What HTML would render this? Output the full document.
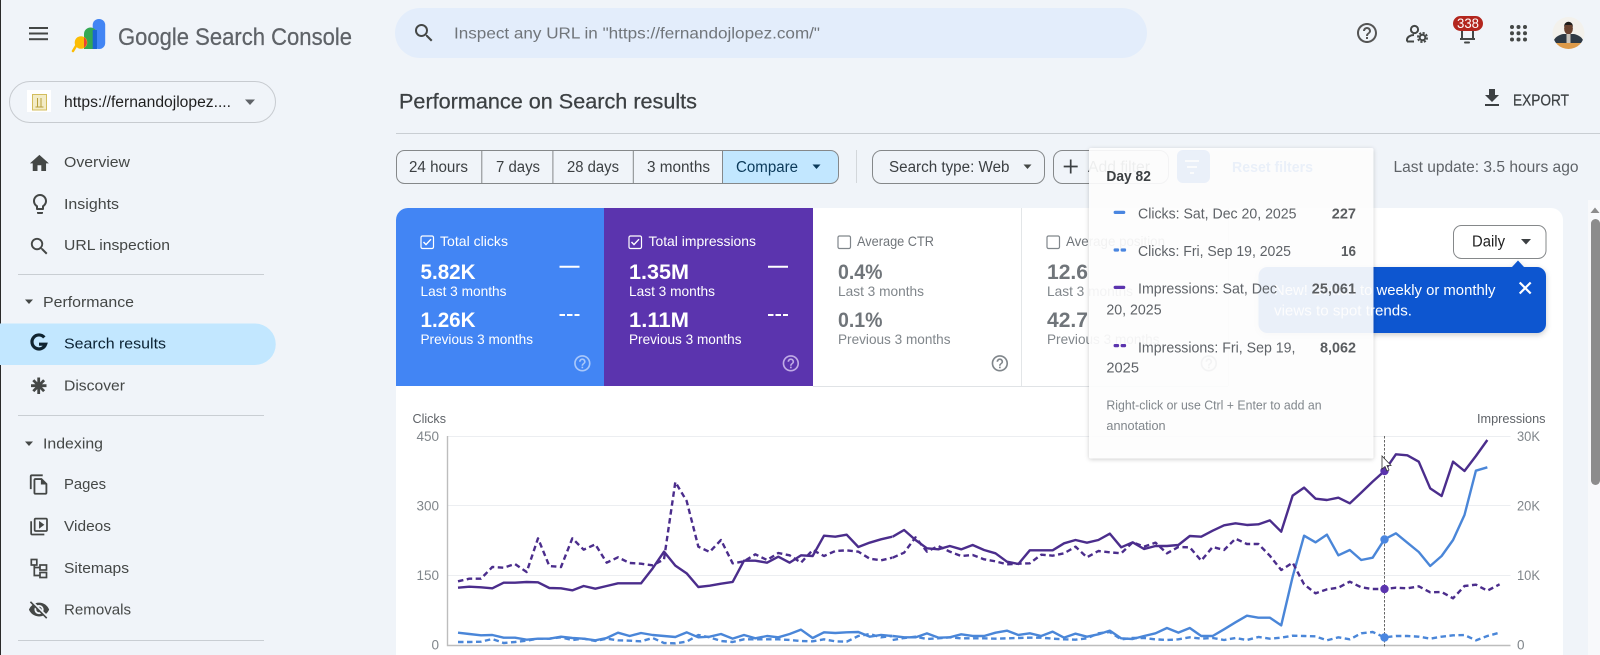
<!DOCTYPE html>
<html lang="en"><head><meta charset="utf-8"><title>Performance on Search results</title>
<style>
html,body{margin:0;padding:0;background:#f0f4f9;width:1600px;height:655px;overflow:hidden}
svg{display:block;filter:blur(.35px)}
text{font-family:"Liberation Sans",Arial,sans-serif}
.s{font-size:15px;fill:#444746;letter-spacing:0}
.t{font-size:15.5px;fill:#3c4043}
.l{font-size:14px}
.v{font-size:21.5px;font-weight:700}
.ax{font-size:13.5px;fill:#80868b}
.tt{font-size:14.5px;fill:#5f6368}
.tv{font-size:14.5px;fill:#5a5d60;font-weight:700}
.ln{fill:none;stroke-width:2.4;stroke-linejoin:round;vector-effect:non-scaling-stroke}
</style></head><body>
<svg width="1600" height="655" viewBox="0 0 1600 655" xmlns="http://www.w3.org/2000/svg">
<defs>
<filter id="sh" x="-10%" y="-10%" width="120%" height="120%"><feDropShadow dx="0" dy="1" stdDeviation="2" flood-color="#000" flood-opacity=".22"/></filter>
<filter id="sh2" x="-10%" y="-10%" width="120%" height="130%"><feDropShadow dx="0" dy="2" stdDeviation="3" flood-color="#000" flood-opacity=".2"/></filter>
<clipPath id="av"><circle cx="1568.5" cy="33" r="16"/></clipPath>
<clipPath id="card"><path d="M408 208H1551a12 12 0 0 1 12 12V655H396V220a12 12 0 0 1 12-12z"/></clipPath>
</defs>
<rect width="1600" height="655" fill="#f0f4f9"/>
<rect x="0" y="0" width="1" height="655" fill="#2a2a2a"/>

<!-- header -->
<g fill="#444746"><rect x="29" y="27" width="19" height="2"/><rect x="29" y="32.5" width="19" height="2"/><rect x="29" y="38.2" width="19" height="2"/></g>
<rect x="92.7" y="19" width="12.5" height="30" rx="6" fill="#4285f4"/>
<path d="M84 49V34a6.5 6.5 0 0 1 13-0v15z" fill="#34a853"/>
<rect x="92.7" y="30" width="4.3" height="19" fill="#1b66d2"/>
<path d="M76 46L73 51" stroke="#fbbc04" stroke-width="2.5" stroke-linecap="round"/>
<circle cx="81" cy="42.5" r="6.3" fill="#fbbc04"/>
<path d="M84 37.2a6.3 6.3 0 0 1 0 10.6z" fill="#ea4335"/>
<text x="118" y="45" font-size="24.5" fill="#5f6368" stroke="#5f6368" stroke-width=".25" textLength="234" lengthAdjust="spacingAndGlyphs">Google Search Console</text>

<rect x="395" y="8" width="752" height="50" rx="25" fill="#e3edfb"/>
<g transform="translate(412,21)" fill="#444746"><path d="M15.5 14h-.79l-.28-.27A6.471 6.471 0 0 0 16 9.5 6.5 6.5 0 1 0 9.5 16c1.61 0 3.09-.59 4.23-1.57l.27.28v.79l5 4.99L20.49 19l-4.99-5zm-6 0C7.01 14 5 11.99 5 9.5S7.01 5 9.5 5 14 7.01 14 9.5 11.99 14 9.5 14z"/></g>
<text x="454" y="38.5" font-size="16" fill="#70757a" textLength="366" lengthAdjust="spacingAndGlyphs">Inspect any URL in "https://fernandojlopez.com/"</text>

<!-- header right -->
<g transform="translate(1355,21)" fill="#555"><path d="M11 18h2v-2h-2v2zm1-16C6.48 2 2 6.48 2 12s4.48 10 10 10 10-4.48 10-10S17.52 2 12 2zm0 18c-4.41 0-8-3.59-8-8s3.59-8 8-8 8 3.59 8 8-3.59 8-8 8zm0-14c-2.21 0-4 1.79-4 4h2c0-1.1.9-2 2-2s2 .9 2 2c0 2-3 1.75-3 5h2c0-2.25 3-2.5 3-5 0-2.21-1.79-4-4-4z"/></g>
<g fill="none" stroke="#444746" stroke-width="2">
<circle cx="1414.5" cy="29.5" r="3.6"/>
<path d="M1407 41.5v-1.7c0-2.8 3.5-4.8 7-4.8"/><path d="M1407 41.5h7"/>
<circle cx="1422.5" cy="37.5" r="2.8"/><circle cx="1422.5" cy="37.5" r="4.6" stroke-dasharray="2.2 1.4" stroke-width="1.8"/>
<path d="M1462 30v9M1473 30v9M1460 39h15" stroke-width="2"/>
</g>
<rect x="1464" y="41.5" width="6" height="2" rx="1" fill="#444746"/>
<rect x="1453" y="16" width="30" height="15" rx="7.5" fill="#b3261e"/>
<text x="1457" y="28" font-size="13.5" fill="#fff" textLength="22" lengthAdjust="spacingAndGlyphs">338</text>
<g fill="#444746"><circle cx="1512" cy="27" r="2"/><circle cx="1518.5" cy="27" r="2"/><circle cx="1525" cy="27" r="2"/><circle cx="1512" cy="33.3" r="2"/><circle cx="1518.5" cy="33.3" r="2"/><circle cx="1525" cy="33.3" r="2"/><circle cx="1512" cy="39.5" r="2"/><circle cx="1518.5" cy="39.5" r="2"/><circle cx="1525" cy="39.5" r="2"/></g>
<g clip-path="url(#av)"><rect x="1552" y="17" width="33" height="33" fill="#f3f1ec"/>
<path d="M1553 43c1-6 6-8 10-9h11c4 1 9 3 10 9z" fill="#2f3a45"/>
<ellipse cx="1568.5" cy="28.5" rx="4.4" ry="6" fill="#6a4330"/><path d="M1564 27c0-7 9-7 9 0l-1-2h-7z" fill="#1e1a18"/>
<rect x="1566.5" y="34" width="4" height="9" fill="#c9c4bc"/>
<rect x="1552" y="43" width="33" height="7" fill="#dd9a4a"/></g>

<!-- sidebar -->
<rect x="9.5" y="81.5" width="266" height="41" rx="20.5" fill="#f0f4f9" stroke="#c7cbd0"/>
<rect x="27" y="90" width="24" height="22" fill="#fff"/>
<rect x="32.5" y="94.5" width="14" height="15.5" fill="#f3ecc6" stroke="#d3bd5c"/>
<path d="M37.5 98v9M41 98v9M35.5 107h8" stroke="#b79f3c" fill="none"/>
<text x="64" y="107" font-size="15.5" fill="#1f1f1f" textLength="167" lengthAdjust="spacingAndGlyphs">https://fernandojlopez....</text>
<path d="M245 99.5h10l-5 5.5z" fill="#5f6368"/>

<g transform="translate(28,152) scale(.95)" fill="#444746"><path d="M10 20v-6h4v6h5v-8h3L12 3 2 12h3v8z"/></g>
<text class="s" x="64" y="167" textLength="66" lengthAdjust="spacingAndGlyphs">Overview</text>
<g transform="translate(28,192)" fill="#444746"><path d="M9 21c0 .55.45 1 1 1h4c.55 0 1-.45 1-1v-1H9v1zm3-19C8.14 2 5 5.14 5 9c0 2.38 1.19 4.47 3 5.74V17c0 .55.45 1 1 1h6c.55 0 1-.45 1-1v-2.26c1.81-1.27 3-3.36 3-5.74 0-3.86-3.14-7-7-7zm2.85 11.1l-.85.6V16h-4v-2.3l-.85-.6A4.997 4.997 0 0 1 7 9c0-2.76 2.24-5 5-5s5 2.24 5 5c0 1.63-.8 3.16-2.15 4.1z"/></g>
<text class="s" x="64" y="209" textLength="55" lengthAdjust="spacingAndGlyphs">Insights</text>
<g transform="translate(28,235) scale(.95)" fill="#444746"><path d="M15.5 14h-.79l-.28-.27A6.471 6.471 0 0 0 16 9.5 6.5 6.5 0 1 0 9.5 16c1.61 0 3.09-.59 4.23-1.57l.27.28v.79l5 4.99L20.49 19l-4.99-5zm-6 0C7.01 14 5 11.99 5 9.5S7.01 5 9.5 5 14 7.01 14 9.5 11.99 14 9.5 14z"/></g>
<text class="s" x="64" y="250" textLength="106" lengthAdjust="spacingAndGlyphs">URL inspection</text>
<rect x="18" y="274" width="246" height="1" fill="#c9ced3"/>

<path d="M25 299.5h8l-4 4.5z" fill="#444746"/>
<text class="s" x="43" y="307" textLength="91" lengthAdjust="spacingAndGlyphs">Performance</text>
<path d="M0 323.5H255a20.5 20.5 0 0 1 0 41.5H0z" fill="#c2e7ff"/>
<path d="M44.3 337.4A7 7 0 1 0 45.6 344.2H39" fill="none" stroke="#0f2330" stroke-width="3.2"/>
<text x="64" y="348.5" font-size="15" fill="#0b2233" font-weight="400" textLength="102" lengthAdjust="spacingAndGlyphs">Search results</text>
<g stroke="#444746" stroke-width="2.8"><path d="M38.7 377.5v16.5M31 385.7h15.5M33.3 380.2l10.8 11M44.1 380.2l-10.8 11"/></g>
<text class="s" x="64" y="390.5" textLength="61" lengthAdjust="spacingAndGlyphs">Discover</text>
<rect x="18" y="415" width="246" height="1" fill="#c9ced3"/>

<path d="M25 441.5h8l-4 4.5z" fill="#444746"/>
<text class="s" x="43" y="448.5" textLength="60" lengthAdjust="spacingAndGlyphs">Indexing</text>
<g transform="translate(28,473.5) scale(.92)" fill="#444746"><path d="M16 1H4c-1.1 0-2 .9-2 2v14h2V3h12V1zm-1 4H8c-1.1 0-1.99.9-1.99 2L6 21c0 1.1.89 2 1.99 2H19c1.1 0 2-.9 2-2V11l-6-6zM8 21V7h6v5h5v9H8z"/></g>
<text class="s" x="64" y="489" textLength="42" lengthAdjust="spacingAndGlyphs">Pages</text>
<g transform="translate(28.5,516) scale(.88)" fill="#444746"><path d="M4 6H2v14c0 1.1.9 2 2 2h14v-2H4V6zm16-4H8c-1.1 0-2 .9-2 2v12c0 1.1.9 2 2 2h12c1.1 0 2-.9 2-2V4c0-1.1-.9-2-2-2zm0 14H8V4h12v12zM12 5.5v9l6-4.5z"/></g>
<text class="s" x="64" y="531" textLength="47" lengthAdjust="spacingAndGlyphs">Videos</text>
<g fill="none" stroke="#444746" stroke-width="1.7"><rect x="31.3" y="559.5" width="5.5" height="5.5"/><rect x="40" y="565" width="6.5" height="5"/><rect x="40" y="572.5" width="6.5" height="5"/><path d="M34.3 565v10.5H40M34.3 567.5H40"/></g>
<text class="s" x="64" y="573" textLength="65" lengthAdjust="spacingAndGlyphs">Sitemaps</text>
<g transform="translate(28,598.5) scale(.92)" fill="#444746"><path d="M12 7c2.76 0 5 2.24 5 5 0 .65-.13 1.26-.36 1.83l2.92 2.92c1.51-1.26 2.7-2.89 3.43-4.75-1.73-4.39-6-7.5-11-7.5-1.4 0-2.74.25-3.98.7l2.16 2.16C10.74 7.13 11.35 7 12 7zM2 4.27l2.28 2.28.46.46A11.804 11.804 0 0 0 1 12c1.73 4.39 6 7.5 11 7.5 1.55 0 3.03-.3 4.38-.84l.42.42L19.73 22 21 20.73 3.27 3 2 4.27zM7.53 9.8l1.55 1.55c-.05.21-.08.43-.08.65 0 1.66 1.34 3 3 3 .22 0 .44-.03.65-.08l1.55 1.55c-.67.33-1.41.53-2.2.53-2.76 0-5-2.24-5-5 0-.79.2-1.53.53-2.2zm4.31-.78l3.15 3.15.02-.16c0-1.66-1.34-3-3-3l-.17.01z"/></g>
<text class="s" x="64" y="614.5" textLength="67" lengthAdjust="spacingAndGlyphs">Removals</text>
<rect x="18" y="640" width="246" height="1" fill="#c9ced3"/>

<!-- title -->
<text x="399" y="108.5" font-size="21.5" fill="#3c4043" stroke="#3c4043" stroke-width=".25" textLength="298" lengthAdjust="spacingAndGlyphs">Performance on Search results</text>
<rect x="396" y="133" width="1204" height="1" fill="#c9ced3"/>
<g transform="translate(1480,86)" fill="#3c4043"><path d="M19 9h-4V3H9v6H5l7 7 7-7zM5 18v2h14v-2H5z"/></g>
<text x="1513" y="105.5" font-size="15.5" fill="#3c4043" stroke="#3c4043" stroke-width=".25" textLength="56" lengthAdjust="spacingAndGlyphs">EXPORT</text>

<!-- filter row -->
<path d="M722.5 150.5H830a8 8 0 0 1 8 8v17a8 8 0 0 1-8 8H722.5z" fill="#c2e7ff"/>
<rect x="396.5" y="150.5" width="442" height="33" rx="8" fill="none" stroke="#85888a"/>
<path d="M481.8 150.5v33M552.9 150.5v33M633.3 150.5v33M722.5 150.5v33" stroke="#85888a"/>
<text class="t" x="409" y="172" textLength="59" lengthAdjust="spacingAndGlyphs">24 hours</text>
<text class="t" x="496" y="172" textLength="44" lengthAdjust="spacingAndGlyphs">7 days</text>
<text class="t" x="567" y="172" textLength="52" lengthAdjust="spacingAndGlyphs">28 days</text>
<text class="t" x="647" y="172" textLength="63" lengthAdjust="spacingAndGlyphs">3 months</text>
<text x="736" y="172" font-size="15.5" fill="#0b3a5a" textLength="62" lengthAdjust="spacingAndGlyphs">Compare</text>
<path d="M812.5 164.5h8l-4 4.5z" fill="#0b3a5a"/>
<rect x="856" y="150" width="1" height="33" fill="#d3d7db"/>
<rect x="872.5" y="150.5" width="172" height="33" rx="9" fill="none" stroke="#85888a"/>
<text class="t" x="889" y="172" textLength="120.5" lengthAdjust="spacingAndGlyphs">Search type: Web</text>
<path d="M1023.5 164.5h8l-4 4.5z" fill="#444746"/>

<rect x="1053.5" y="150.5" width="115" height="33" rx="9" fill="none" stroke="#85888a"/>
<path d="M1070.7 159.5v14M1063.7 166.5h14" stroke="#3c4043" stroke-width="1.7"/>
<text class="t" x="1088" y="172" textLength="62" lengthAdjust="spacingAndGlyphs">Add filter</text>
<rect x="1177" y="150" width="33" height="33" rx="6" fill="#0b57d0"/>
<path d="M1185 161h14M1187 167h10M1190 173h4" stroke="#fff" stroke-width="1.8"/>
<text x="1232" y="172" font-size="15" font-weight="700" fill="#0b57d0" textLength="81" lengthAdjust="spacingAndGlyphs">Reset filters</text>
<text x="1393.5" y="172" font-size="16" fill="#5f6368" textLength="185" lengthAdjust="spacingAndGlyphs">Last update: 3.5 hours ago</text>

<!-- card -->
<path d="M408 208H1551a12 12 0 0 1 12 12V655H396V220a12 12 0 0 1 12-12z" fill="#fff"/>
<g clip-path="url(#card)">
<rect x="396" y="208" width="208" height="178" fill="#4285f4"/>
<rect x="604" y="208" width="209" height="178" fill="#5b34ae"/>
</g>
<rect x="813" y="386" width="415" height="1" fill="#e0e3e6"/>
<rect x="1021" y="208" width="1" height="178" fill="#e3e6e8"/>
<rect x="1228" y="208" width="1" height="178" fill="#e3e6e8"/>

<!-- clicks -->
<rect x="421" y="236" width="12.5" height="12.5" rx="1.5" fill="none" stroke="#fff" stroke-width="1.2"/><path d="M423.5 242l2.5 2.6 5-5.4" fill="none" stroke="#fff" stroke-width="1.4"/>
<text class="l" x="440" y="246" fill="#fff" textLength="68" lengthAdjust="spacingAndGlyphs">Total clicks</text>
<text class="v" x="420.5" y="279" fill="#fff" textLength="55" lengthAdjust="spacingAndGlyphs">5.82K</text>
<text class="l" x="420.5" y="296" fill="#fff" textLength="86" lengthAdjust="spacingAndGlyphs">Last 3 months</text>
<text class="v" x="420.5" y="327" fill="#fff" textLength="55" lengthAdjust="spacingAndGlyphs">1.26K</text>
<text class="l" x="420.5" y="344" fill="#fff" textLength="112.5" lengthAdjust="spacingAndGlyphs">Previous 3 months</text>
<path d="M559.5 266.7h20" stroke="#fff" stroke-width="2"/><path d="M559.5 315h20" stroke="#fff" stroke-width="2" stroke-dasharray="5.5 2"/>
<g transform="translate(572.5,353.5) scale(.82)" fill="#a9c8fa"><path d="M11 18h2v-2h-2v2zm1-16C6.48 2 2 6.48 2 12s4.48 10 10 10 10-4.48 10-10S17.52 2 12 2zm0 18c-4.41 0-8-3.59-8-8s3.59-8 8-8 8 3.59 8 8-3.59 8-8 8zm0-14c-2.21 0-4 1.79-4 4h2c0-1.1.9-2 2-2s2 .9 2 2c0 2-3 1.75-3 5h2c0-2.25 3-2.5 3-5 0-2.21-1.79-4-4-4z"/></g>
<!-- impressions -->
<rect x="629" y="236" width="12.5" height="12.5" rx="1.5" fill="none" stroke="#fff" stroke-width="1.2"/><path d="M631.5 242l2.5 2.6 5-5.4" fill="none" stroke="#fff" stroke-width="1.4"/>
<text class="l" x="648.5" y="246" fill="#fff" textLength="107.5" lengthAdjust="spacingAndGlyphs">Total impressions</text>
<text class="v" x="629" y="279" fill="#fff" textLength="60" lengthAdjust="spacingAndGlyphs">1.35M</text>
<text class="l" x="629" y="296" fill="#fff" textLength="86" lengthAdjust="spacingAndGlyphs">Last 3 months</text>
<text class="v" x="629" y="327" fill="#fff" textLength="60" lengthAdjust="spacingAndGlyphs">1.11M</text>
<text class="l" x="629" y="344" fill="#fff" textLength="112.5" lengthAdjust="spacingAndGlyphs">Previous 3 months</text>
<path d="M768 266.7h20" stroke="#fff" stroke-width="2"/><path d="M768 315h20" stroke="#fff" stroke-width="2" stroke-dasharray="5.5 2"/>
<g transform="translate(781,353.5) scale(.82)" fill="#c0abe6"><path d="M11 18h2v-2h-2v2zm1-16C6.48 2 2 6.48 2 12s4.48 10 10 10 10-4.48 10-10S17.52 2 12 2zm0 18c-4.41 0-8-3.59-8-8s3.59-8 8-8 8 3.59 8 8-3.59 8-8 8zm0-14c-2.21 0-4 1.79-4 4h2c0-1.1.9-2 2-2s2 .9 2 2c0 2-3 1.75-3 5h2c0-2.25 3-2.5 3-5 0-2.21-1.79-4-4-4z"/></g>
<!-- ctr -->
<rect x="838" y="236" width="12.5" height="12.5" rx="1.5" fill="none" stroke="#80868b" stroke-width="1.2"/>
<text class="l" x="857" y="246" fill="#70757a" textLength="77" lengthAdjust="spacingAndGlyphs">Average CTR</text>
<text class="v" x="838" y="279" fill="#70757a" textLength="44.5" lengthAdjust="spacingAndGlyphs">0.4%</text>
<text class="l" x="838" y="296" fill="#80868b" textLength="86" lengthAdjust="spacingAndGlyphs">Last 3 months</text>
<text class="v" x="838" y="327" fill="#70757a" textLength="44.5" lengthAdjust="spacingAndGlyphs">0.1%</text>
<text class="l" x="838" y="344" fill="#80868b" textLength="112.5" lengthAdjust="spacingAndGlyphs">Previous 3 months</text>
<g transform="translate(990,353.5) scale(.82)" fill="#80868b"><path d="M11 18h2v-2h-2v2zm1-16C6.48 2 2 6.48 2 12s4.48 10 10 10 10-4.48 10-10S17.52 2 12 2zm0 18c-4.41 0-8-3.59-8-8s3.59-8 8-8 8 3.59 8 8-3.59 8-8 8zm0-14c-2.21 0-4 1.79-4 4h2c0-1.1.9-2 2-2s2 .9 2 2c0 2-3 1.75-3 5h2c0-2.25 3-2.5 3-5 0-2.21-1.79-4-4-4z"/></g>
<!-- position -->
<rect x="1047" y="236" width="12.5" height="12.5" rx="1.5" fill="none" stroke="#80868b" stroke-width="1.2"/>
<text class="l" x="1066" y="246" fill="#70757a" textLength="99" lengthAdjust="spacingAndGlyphs">Average position</text>
<text class="v" x="1047" y="279" fill="#70757a" textLength="41" lengthAdjust="spacingAndGlyphs">12.6</text>
<text class="l" x="1047" y="296" fill="#80868b" textLength="86" lengthAdjust="spacingAndGlyphs">Last 3 months</text>
<text class="v" x="1047" y="327" fill="#70757a" textLength="41" lengthAdjust="spacingAndGlyphs">42.7</text>
<text class="l" x="1047" y="344" fill="#80868b" textLength="112.5" lengthAdjust="spacingAndGlyphs">Previous 3 months</text>
<g transform="translate(1199,353.5) scale(.82)" fill="#80868b"><path d="M11 18h2v-2h-2v2zm1-16C6.48 2 2 6.48 2 12s4.48 10 10 10 10-4.48 10-10S17.52 2 12 2zm0 18c-4.41 0-8-3.59-8-8s3.59-8 8-8 8 3.59 8 8-3.59 8-8 8zm0-14c-2.21 0-4 1.79-4 4h2c0-1.1.9-2 2-2s2 .9 2 2c0 2-3 1.75-3 5h2c0-2.25 3-2.5 3-5 0-2.21-1.79-4-4-4z"/></g>

<!-- daily + bubble -->
<rect x="1453.5" y="225.5" width="92.5" height="33" rx="8" fill="#fff" stroke="#85888a"/>
<text class="t" x="1472" y="246.5" textLength="33" lengthAdjust="spacingAndGlyphs" style="fill:#1f1f1f">Daily</text>
<path d="M1521 239h10l-5 5.5z" fill="#3c4043"/>
<g filter="url(#sh2)"><rect x="1258.5" y="267" width="287.5" height="66" rx="9" fill="#0b57d0"/><path d="M1512 267l6-6.5 6 6.5z" fill="#0b57d0"/></g>
<text x="1274" y="295" font-size="15" fill="#fff" textLength="221.5" lengthAdjust="spacingAndGlyphs">New! Switch to weekly or monthly</text>
<text x="1274" y="315.5" font-size="15" fill="#fff" textLength="138" lengthAdjust="spacingAndGlyphs">views to spot trends.</text>
<path d="M1519.7 282.5l11 11M1530.7 282.5l-11 11" stroke="#fff" stroke-width="2.2"/>

<!-- chart axis -->
<text class="ax" x="412.5" y="423" textLength="33.5" lengthAdjust="spacingAndGlyphs" style="font-size:13px;fill:#5f6368">Clicks</text>
<text class="ax" x="1477" y="423" textLength="68.5" lengthAdjust="spacingAndGlyphs" style="font-size:13px;fill:#5f6368">Impressions</text>
<g stroke="#eceef1"><path d="M447 436.5H1510.5M447 505.5H1510.5M447 575.5H1510.5"/></g>
<path d="M447.5 436V645.5H1510.5" fill="none" stroke="#bdbdbd" stroke-width="1.4"/>
<g class="ax" text-anchor="end">
<text x="439" y="441">450</text><text x="439" y="510.5">300</text><text x="439" y="580">150</text><text x="439" y="649.5">0</text></g>
<g class="ax">
<text x="1517" y="441" textLength="23" lengthAdjust="spacingAndGlyphs">30K</text><text x="1517" y="510.5" textLength="23" lengthAdjust="spacingAndGlyphs">20K</text><text x="1517" y="580" textLength="23" lengthAdjust="spacingAndGlyphs">10K</text><text x="1517" y="649.5">0</text></g>

<!-- series, first half in 3x coordinates -->
<g transform="translate(390,420) scale(.33333)">
<polyline class="ln" stroke="#4a86d8" points="204,638 238,642 273,646 307,645 341,653 375,653 410,659 444,656 478,656 513,650 547,654 581,656 616,661 650,654 684,638 719,648 753,639 788,645 822,648 856,651 890,637 925,652 959,650 993,642 1028,656 1062,645 1096,655 1131,648 1165,652 1199,642 1233,629 1268,654 1302,637 1336,639 1370,637 1405,636 1439,650 1473,645 1507,648"/>
<polyline class="ln" stroke="#4a86d8" stroke-dasharray="5.5 3.5" points="204,666 238,666 273,665 307,657 341,669 375,666 410,662 444,656 478,656 513,652 547,660 581,656 616,663 650,656 684,661 719,662 753,664 788,654 822,669 856,670 890,665 925,645 959,652 993,663 1028,666 1062,658 1096,658 1131,658 1165,658 1199,660 1233,663 1268,664 1302,658 1336,664 1370,665 1405,648 1439,642 1473,652 1507,648"/>
<polyline class="ln" stroke="#4b2d8c" stroke-dasharray="5.5 3.5" points="204,484 238,476 273,476 307,441 341,443 375,432 410,456 444,355 478,438 513,441 547,355 581,389 616,373 650,428 684,412 719,429 753,431 788,436 822,418 856,186 890,243 925,380 959,396 993,360 1028,430 1062,424 1096,403 1131,420 1165,399 1199,406 1233,428 1268,390 1302,408 1336,393 1370,391 1405,395 1439,416 1473,421 1507,413"/>
<polyline class="ln" stroke="#4b2d8c" points="204,503 238,500 273,502 307,505 341,488 375,488 410,486 444,487 478,504 513,505 547,511 581,498 616,506 650,498 684,490 719,490 753,490 788,445 822,395 856,437 890,460 925,501 959,497 993,491 1028,486 1062,422 1096,422 1131,428 1165,410 1199,428 1233,406 1268,408 1302,347 1336,350 1370,344 1405,381 1439,368 1473,358 1507,350"/>
</g>
<!-- series, second half -->
<g transform="translate(880,420) scale(.40816,.33333)">
<polyline class="ln" stroke="#4a86d8" stroke-dasharray="5.5 3.5" points="31,660 59,654 87,650 115,657 143,655 171,652 199,655 227,655 255,655 283,656 311,655 339,654 367,653 395,653 423,656 451,658 479,659 507,655 535,640 563,636 591,658 619,654 647,654 675,658 703,660 731,658 759,652 787,656 815,654 843,660 871,654 899,660 927,651 955,656 983,653 1011,647 1039,648 1067,649 1095,661 1123,652 1151,658 1179,640 1207,636 1236,652 1264,648 1292,648 1320,650 1348,656 1376,650 1404,646 1432,645 1460,661 1488,648 1518,638"/>
<polyline class="ln" stroke="#4a86d8" points="31,648 59,652 87,652 115,640 143,653 171,652 199,643 227,648 255,648 283,638 311,632 339,645 367,640 395,648 423,635 451,653 479,641 507,650 535,643 563,632 591,655 619,657 647,648 675,640 703,624 731,638 759,624 787,648 815,648 843,628 871,607 899,587 927,593 955,593 983,616 1011,470 1039,347 1067,367 1095,344 1123,406 1151,390 1179,420 1207,413 1236,358 1264,340 1292,368 1320,396 1348,438 1376,408 1404,360 1432,285 1460,152 1488,142"/>
<polyline class="ln" stroke="#4b2d8c" stroke-dasharray="5.5 3.5" points="31,413 59,398 87,352 115,395 143,378 171,395 199,408 227,405 255,418 283,424 311,433 339,431 367,430 395,404 423,407 451,400 479,380 507,412 535,393 563,397 591,400 619,367 647,380 675,368 703,400 731,381 759,382 787,422 815,381 843,390 871,356 899,372 927,372 955,407 983,450 1011,428 1039,493 1067,520 1095,508 1123,503 1151,485 1179,502 1207,507 1236,507 1264,503 1292,505 1320,499 1348,517 1376,516 1404,535 1432,498 1460,494 1488,512 1518,493"/>
<polyline class="ln" stroke="#4b2d8c" points="31,350 59,330 87,360 115,385 143,388 171,378 199,388 227,375 255,390 283,400 311,425 339,432 367,391 395,391 423,391 451,370 479,360 507,368 535,360 563,341 591,382 619,367 647,387 675,378 703,378 731,375 759,348 787,350 815,332 843,316 871,310 899,315 927,313 955,301 983,335 1011,227 1039,203 1067,236 1095,240 1123,233 1151,250 1179,218 1207,185 1236,153 1264,103 1292,106 1320,125 1348,205 1376,228 1404,125 1432,153 1460,108 1488,60"/>
</g>
<path d="M1384.5 436V648" stroke="#666" stroke-dasharray="2.5 1.5"/>
<circle cx="1384.5" cy="471" r="4.2" fill="#5b34ae"/>
<circle cx="1384.5" cy="539.5" r="4.2" fill="#4a86e0"/>
<circle cx="1384.5" cy="589" r="4.2" fill="#5b34ae"/>
<circle cx="1384.5" cy="637.5" r="4.2" fill="#4a86e0"/>
<path d="M1382 456v13l3-2.5 2 4.5 2-1-2-4.5h4z" fill="#fff" stroke="#333" stroke-width=".8"/>

<!-- tooltip -->
<g filter="url(#sh)"><rect x="1089" y="148" width="284.5" height="310.5" rx="2" fill="#fff" fill-opacity=".9"/></g>
<text x="1106.4" y="181" font-size="14.5" font-weight="700" fill="#3c4043" textLength="44.5" lengthAdjust="spacingAndGlyphs">Day 82</text>
<rect x="1113.6" y="210.8" width="11.7" height="3.2" rx="1.6" fill="#4a86e0"/>
<text class="tt" x="1138" y="218.3" textLength="158.5" lengthAdjust="spacingAndGlyphs">Clicks: Sat, Dec 20, 2025</text>
<text class="tv" x="1331.8" y="218.3" textLength="24.2" lengthAdjust="spacingAndGlyphs">227</text>
<rect x="1113.6" y="248.4" width="5.5" height="3.2" rx="1.2" fill="#4a86e0"/><rect x="1120.6" y="248.4" width="5.5" height="3.2" rx="1.2" fill="#4a86e0"/>
<text class="tt" x="1138" y="256" textLength="153" lengthAdjust="spacingAndGlyphs">Clicks: Fri, Sep 19, 2025</text>
<text class="tv" x="1341" y="256" textLength="15" lengthAdjust="spacingAndGlyphs">16</text>
<rect x="1113.6" y="285.8" width="11.7" height="3.2" rx="1.6" fill="#5b34ae"/>
<text class="tt" x="1138" y="293.7" textLength="139" lengthAdjust="spacingAndGlyphs">Impressions: Sat, Dec</text>
<text class="tt" x="1106.4" y="314.3" textLength="55.2" lengthAdjust="spacingAndGlyphs">20, 2025</text>
<text class="tv" x="1311.8" y="293.7" textLength="44.2" lengthAdjust="spacingAndGlyphs">25,061</text>
<rect x="1113.6" y="344" width="5.5" height="3.2" rx="1.2" fill="#5b34ae"/><rect x="1120.6" y="344" width="5.5" height="3.2" rx="1.2" fill="#5b34ae"/>
<text class="tt" x="1138" y="352.3" textLength="157.5" lengthAdjust="spacingAndGlyphs">Impressions: Fri, Sep 19,</text>
<text class="tt" x="1106.4" y="372.7" textLength="32.6" lengthAdjust="spacingAndGlyphs">2025</text>
<text class="tv" x="1320" y="352.3" textLength="36" lengthAdjust="spacingAndGlyphs">8,062</text>
<text x="1106.4" y="409.3" font-size="13" fill="#80868b" textLength="215.2" lengthAdjust="spacingAndGlyphs">Right-click or use Ctrl + Enter to add an</text>
<text x="1106.4" y="430" font-size="13" fill="#80868b" textLength="59.2" lengthAdjust="spacingAndGlyphs">annotation</text>

<!-- scrollbar -->
<rect x="1588" y="200" width="12" height="455" fill="#f8f9fb"/>
<path d="M1590.5 213l4.5-5.5 4.5 5.5z" fill="#8c8c8c"/>
<rect x="1591" y="219" width="9" height="266" rx="4.5" fill="#8c8c8c"/>
</svg>
</body></html>
